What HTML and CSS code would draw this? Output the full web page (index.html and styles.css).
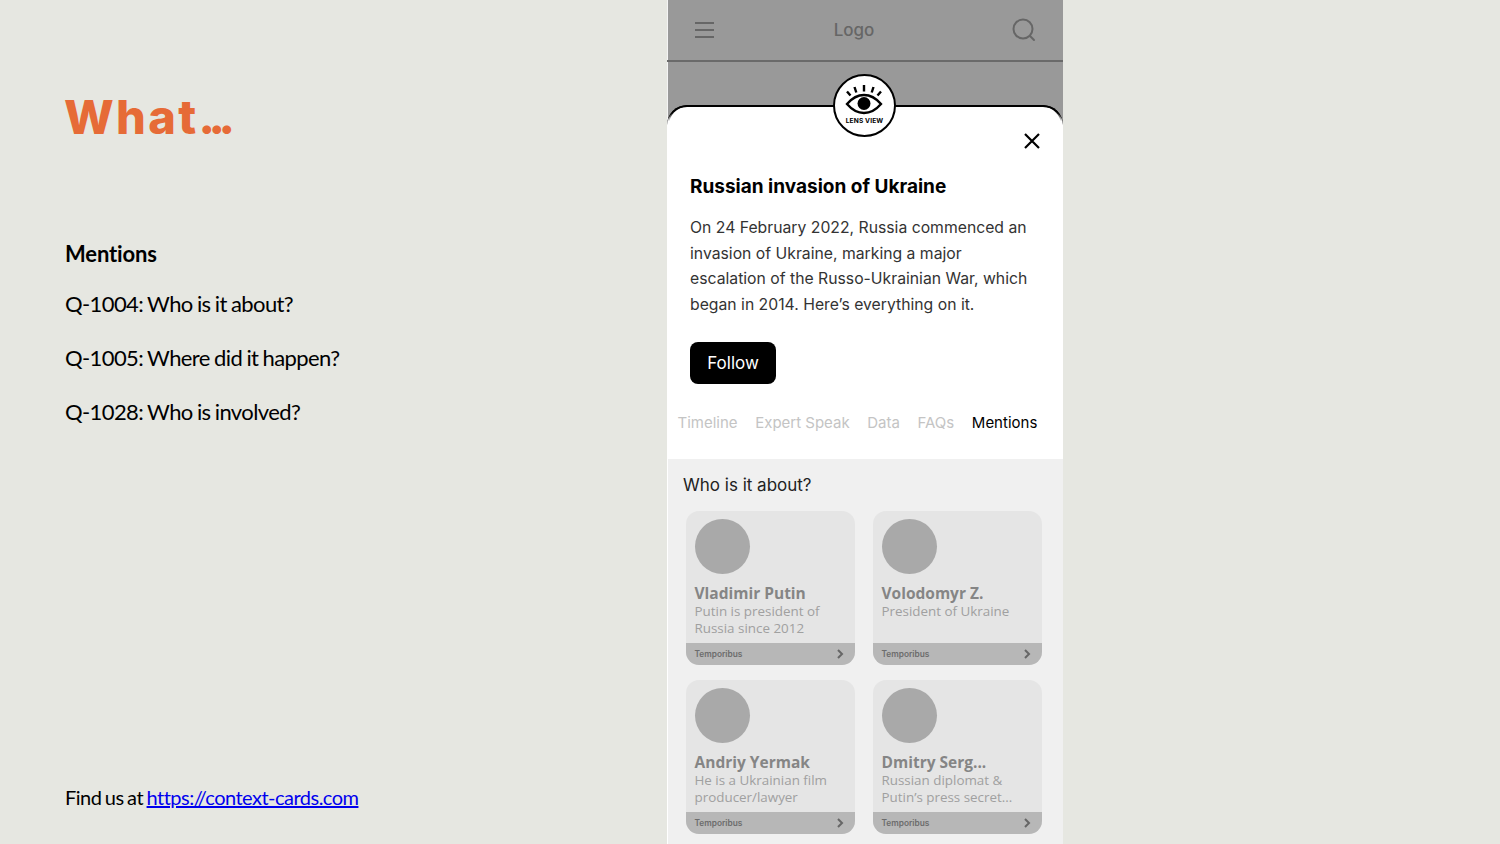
FILE: index.html
```html
<!DOCTYPE html>
<html lang="en">
<head>
  <meta charset="UTF-8">
  <meta name="viewport" content="width=device-width, initial-scale=1.0">
  <title>What...</title>
  <link rel="stylesheet" href="styles.css">
</head>
<body>

  <!-- Left column -->
  <div class="slide-text">
    <h1>What<span class="dots">...</span></h1>
    <h2>Mentions</h2>
    <p>Q-1004: Who is it about?</p>
    <p>Q-1005: Where did it happen?</p>
    <p>Q-1028: Who is involved?</p>
    <p class="find-us">Find us at <a href="https://context-cards.com">https://context-cards.com</a></p>
  </div>

  <!-- Phone mockup -->
  <div class="phone">
    <div class="app-bar">
      <svg width="24" height="24" viewBox="0 0 24 24" fill="none" stroke="#666" stroke-width="2">
        <path d="M2 5h19M2 12h19M2 19h19"/>
      </svg>
      <span class="logo">Logo</span>
      <svg width="26" height="26" viewBox="0 0 26 26" fill="none" stroke="#666" stroke-width="2" stroke-linecap="round">
        <circle cx="12" cy="12" r="9.500"/>
        <path d="M19 19l4 4"/>
      </svg>
    </div>
    <div class="gap"></div>

    <div class="sheet">
      <div class="badge">
        <svg width="40" height="32" viewBox="1 1 40 32" fill="none" stroke="#000">
          <path d="M3 7.500l3.500 4M10.500 3l1.800 5.500M20 1v6.500M29.500 3l-1.800 5.500M37 7.500l-3.500 4" stroke-width="2.400"/>
          <path d="M3 20C9 13 14 11 20 11S31 13 37 20C31 27 26 29 20 29S9 27 3 20Z" stroke-width="2.400"/>
          <circle cx="20" cy="19.500" r="6.500" fill="#000" stroke="none"/>
        </svg>
        <span class="badge-label">LENS VIEW</span>
      </div>

      <svg class="close" width="18" height="18" viewBox="0 0 18 18" fill="none" stroke="#000" stroke-width="2.200">
        <path d="M2 2l14 14M16 2L2 16"/>
      </svg>

      <div class="sheet-body">
        <h3>Russian invasion of Ukraine</h3>
        <p class="intro">On 24 February 2022, Russia commenced an invasion of Ukraine, marking a major escalation of the Russo-Ukrainian War, which began in 2014. Here’s everything on it.</p>
        <button class="follow">Follow</button>
      </div>

      <div class="tabs">
        <span>Timeline</span>
        <span>Expert Speak</span>
        <span>Data</span>
        <span>FAQs</span>
        <span class="active">Mentions</span>
      </div>

      <div class="mentions">
        <div class="mentions-title">Who is it about?</div>
        <div class="cards">
          <div class="card">
            <div class="card-top">
              <div class="avatar"></div>
              <div class="name">Vladimir Putin</div>
              <div class="desc">Putin is president of Russia since 2012</div>
            </div>
            <div class="card-foot"><span>Temporibus</span><svg width="8" height="10" viewBox="0 0 8 10" fill="none" stroke="#666" stroke-width="2"><path d="M2 1l4 4-4 4"/></svg></div>
          </div>
          <div class="card">
            <div class="card-top">
              <div class="avatar"></div>
              <div class="name">Volodomyr Z.</div>
              <div class="desc">President of Ukraine</div>
            </div>
            <div class="card-foot"><span>Temporibus</span><svg width="8" height="10" viewBox="0 0 8 10" fill="none" stroke="#666" stroke-width="2"><path d="M2 1l4 4-4 4"/></svg></div>
          </div>
          <div class="card">
            <div class="card-top">
              <div class="avatar"></div>
              <div class="name">Andriy Yermak</div>
              <div class="desc">He is a Ukrainian film producer/lawyer</div>
            </div>
            <div class="card-foot"><span>Temporibus</span><svg width="8" height="10" viewBox="0 0 8 10" fill="none" stroke="#666" stroke-width="2"><path d="M2 1l4 4-4 4"/></svg></div>
          </div>
          <div class="card">
            <div class="card-top">
              <div class="avatar"></div>
              <div class="name">Dmitry Serg...</div>
              <div class="desc">Russian diplomat &amp; Putin’s press secret...</div>
            </div>
            <div class="card-foot"><span>Temporibus</span><svg width="8" height="10" viewBox="0 0 8 10" fill="none" stroke="#666" stroke-width="2"><path d="M2 1l4 4-4 4"/></svg></div>
          </div>
        </div>
      </div>
    </div>
  </div>

</body>
</html>
```

FILE: styles.css
```css
/* Base */
html, body {
  height: 844px;
  overflow: hidden;
}

body {
  margin: 0;
  padding: 0;
  background-color: #e6e7e1;
  font-family: Lato, sans-serif;
  color: #000;
  display: flex;
}

/* Left column */
.slide-text {
  width: 668px;
  box-sizing: border-box;
  padding: 88px 0 0 65px;
  display: flex;
  flex-direction: column;
}

.slide-text h1 {
  margin: 0 0 0 -1px;
  font-family: Inter, sans-serif;
  font-size: 47px;
  line-height: 58px;
  font-weight: 800;
  letter-spacing: 2.300px;
  color: #e66b37;
}

.slide-text h1 .dots {
  letter-spacing: -6.500px;
}

.slide-text h2 {
  margin: 93px 0 0;
  font-size: 22px;
  line-height: 30px;
  font-weight: 700;
  letter-spacing: -0.150px;
}

.slide-text p {
  margin: 24px 0 0;
  font-size: 22px;
  line-height: 30px;
  letter-spacing: -0.600px;
  word-spacing: -0.800px;
}

.slide-text h2 + p {
  margin-top: 20px;
}

.slide-text .find-us {
  margin-top: auto;
  margin-bottom: 32px;
  font-size: 20px;
  letter-spacing: -0.520px;
  word-spacing: -1.100px;
}

.find-us a {
  color: #0000ee;
}

/* Phone */
.phone {
  width: 395px;
  height: 844px;
  background-color: #999;
  box-shadow: -1px 0 0 #f4f4f4;
  display: flex;
  flex-direction: column;
  font-family: Inter, sans-serif;
}

.app-bar {
  height: 60px;
  box-sizing: border-box;
  padding: 0 26px 0 25px;
  display: flex;
  align-items: center;
  justify-content: space-between;
  flex-shrink: 0;
}

.logo {
  margin-right: 20px;
  font-size: 17px;
  font-weight: 500;
  color: #666;
}

.gap {
  height: 43px;
  margin-left: -1px;
  border-top: 2px solid #6a6a6a;
  flex-shrink: 0;
}

/* Bottom sheet */
.sheet {
  position: relative;
  flex: 1;
  margin-left: -1px;
  background-color: #fff;
  border-top: 2px solid #000;
  border-radius: 20px 20px 0 0;
  display: flex;
  flex-direction: column;
}

/* dark line fades out round the corners */
.sheet::before {
  content: "";
  position: absolute;
  top: -2px;
  left: 0;
  right: 0;
  height: 20px;
  border: 2px solid #000;
  border-bottom: none;
  border-radius: 20px 20px 0 0;
  -webkit-mask-image: linear-gradient(#000 35%, transparent 75%);
  mask-image: linear-gradient(#000 35%, transparent 75%);
}

.badge {
  position: absolute;
  z-index: 1;
  top: -33px;
  left: 166px;
  width: 63px;
  height: 63px;
  box-sizing: border-box;
  border: 2px solid #000;
  border-radius: 50%;
  background-color: #fff;
  display: flex;
  flex-direction: column;
  align-items: center;
  padding-top: 9px;
}

.badge-label {
  font-size: 6.600px;
  line-height: 8px;
  font-weight: 700;
  letter-spacing: 0.150px;
  white-space: nowrap;
}

.close {
  position: absolute;
  top: 25px;
  left: 356px;
}

.sheet-body {
  padding: 67px 30px 0 23px;
}

.sheet-body h3 {
  margin: 0;
  font-size: 19px;
  line-height: 26px;
  font-weight: 700;
}

.intro {
  margin: 15px 0 0;
  font-size: 15.750px;
  line-height: 25.500px;
  color: #333;
}

.follow {
  display: block;
  margin-top: 25px;
  width: 86px;
  height: 42px;
  border: none;
  border-radius: 8px;
  background-color: #000;
  color: #fff;
  font-family: Inter, sans-serif;
  font-size: 17px;
}

.tabs {
  margin-top: 28px;
  padding-left: 10.500px;
  display: flex;
  gap: 17.600px;
  font-size: 15px;
  line-height: 22px;
  color: #c4c4c4;
  white-space: nowrap;
}

.tabs .active {
  color: #000;
}

/* Mentions */
.mentions {
  margin-top: 25px;
  margin-left: 1px;
  flex: 1;
  background-color: #f0f0f0;
  padding: 14px 21px 0 18px;
}

.mentions-title {
  margin-left: -3px;
  font-size: 17px;
  line-height: 24px;
  color: #222;
}

.cards {
  margin-top: 14px;
  display: grid;
  grid-template-columns: 169px 169px;
  grid-auto-rows: 154px;
  gap: 15px 18px;
}

.card {
  background-color: #e5e5e5;
  border-radius: 13px;
  overflow: hidden;
  display: flex;
  flex-direction: column;
}

.card-top {
  flex: 1;
  padding: 8px 8.500px 0;
}

.avatar {
  width: 55px;
  height: 55px;
  border-radius: 50%;
  background-color: #a9a9a9;
}

.name {
  margin-top: 9px;
  font-family: "Open Sans", sans-serif;
  font-size: 15.500px;
  line-height: 20px;
  font-weight: 700;
  color: #858585;
}

.desc {
  font-family: "Open Sans", sans-serif;
  font-size: 13.400px;
  line-height: 17px;
  color: #a0a0a0;
}

.card-foot {
  height: 22px;
  padding: 0 11px 0 8.500px;
  background-color: #b7b7b7;
  display: flex;
  align-items: center;
  justify-content: space-between;
  font-size: 8.300px;
  font-weight: 600;
  color: #6c6c6c;
}
```
